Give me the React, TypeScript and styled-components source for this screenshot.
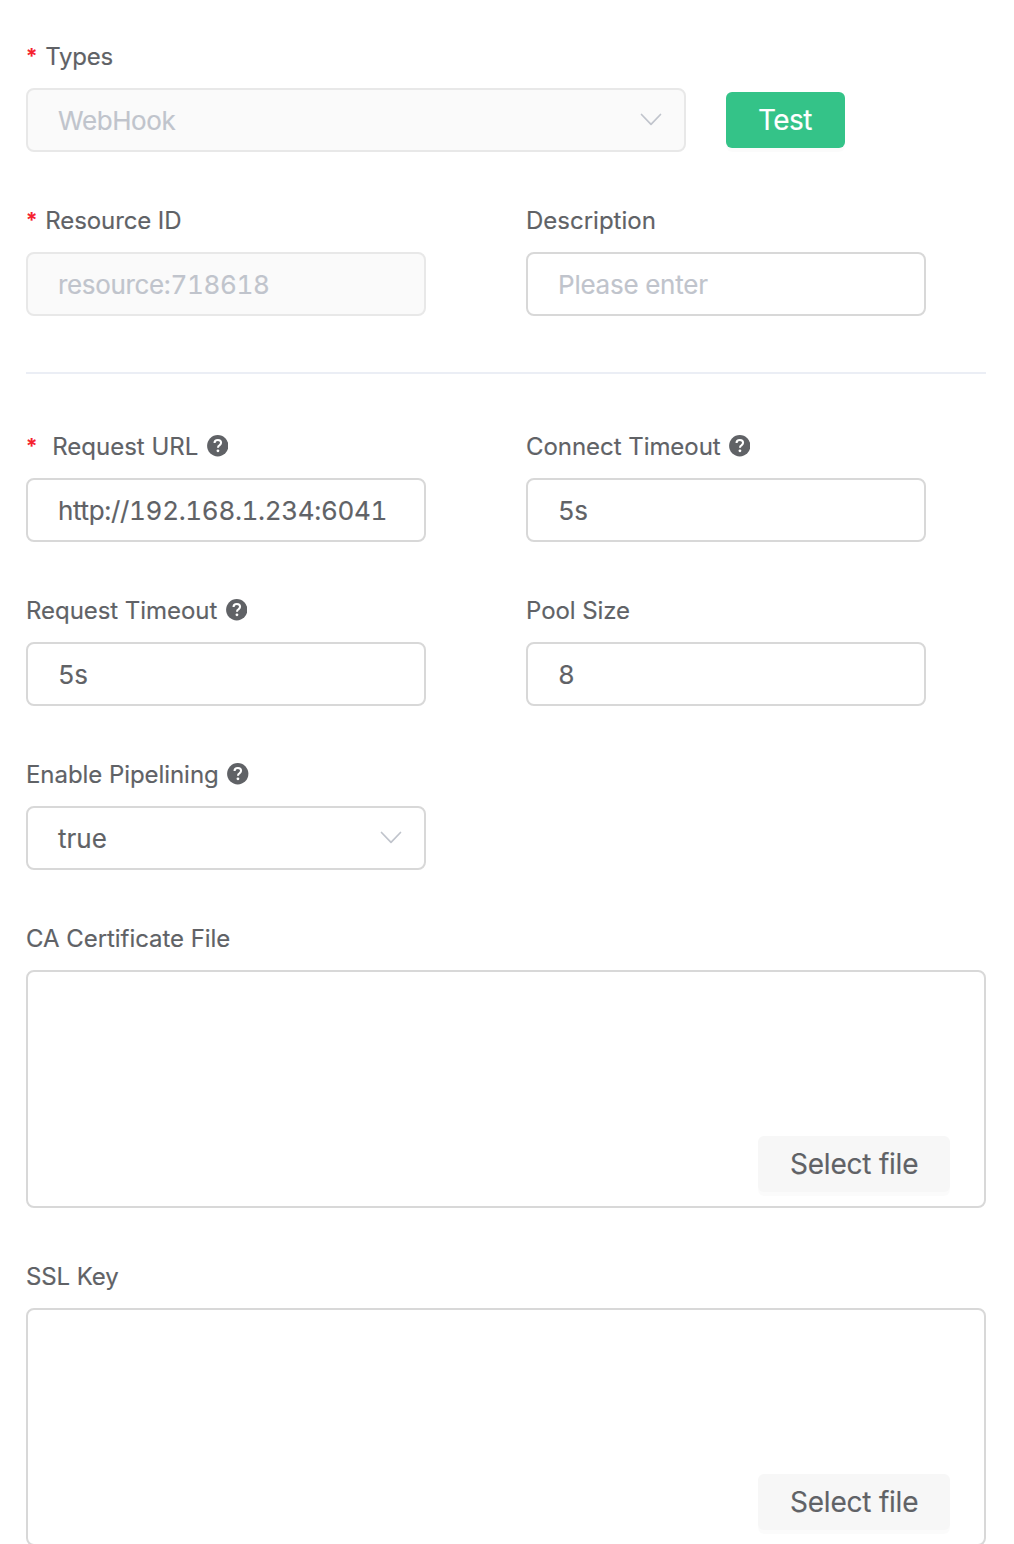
import React from "react";
import styled, { createGlobalStyle } from "styled-components";

const GlobalStyle = createGlobalStyle`
  *, *::before, *::after { box-sizing: border-box; }
  html, body { margin: 0; background: #fff; overflow: hidden; }
  body {
    font-family: Inter, "Liberation Sans", sans-serif;
    color: #606266;
    -webkit-text-stroke: 0.15px currentColor;
  }
`;

const Form = styled.form`
  width: 1014px;
  height: 1544px;
  overflow: hidden;
  padding: 36px 28px 0 26px;
`;

const Row = styled.div`
  display: flex;
  gap: 100px;
  margin-bottom: 48px;
`;

const Field = styled.div<{ $width: number }>`
  width: ${(p) => p.$width}px;
`;

const Label = styled.label<{ $spacing?: number }>`
  display: flex;
  align-items: center;
  height: 40px;
  margin-bottom: 12px;
  padding-top: 2px;
  font-size: 24px;
  line-height: 38px;
  letter-spacing: ${(p) => p.$spacing ?? 0}px;
  white-space: nowrap;
`;

const Required = styled.span<{ $gap: number }>`
  width: 10px;
  margin: -1px ${(p) => p.$gap}px 0 0;
  color: #f5222d;
  font-size: 21px;
  font-weight: 600;
  letter-spacing: 0;
`;

const controlBox = `
  width: 100%;
  border: 2px solid #d8d8d8;
  border-radius: 8px;
  background: #fff;
`;

const Input = styled.input<{ $spacing?: number }>`
  ${controlBox}
  display: block;
  height: 64px;
  padding: 0 28px 0 30px;
  outline: none;
  color: #606266;
  font: 26px Inter, "Liberation Sans", sans-serif;
  font-variant-numeric: tabular-nums;
  letter-spacing: ${(p) => p.$spacing ?? 0}px;
  &::placeholder { color: #c0c4cc; opacity: 1; }
  &:disabled { background: #fafafa; border-color: #e8e8e8; color: #c0c4cc; }
`;

const Select = styled.div<{ $disabled?: boolean; $spacing?: number }>`
  ${controlBox}
  display: flex;
  align-items: center;
  justify-content: space-between;
  height: 64px;
  padding: 0 22px 0 30px;
  font-size: 26px;
  letter-spacing: ${(p) => p.$spacing ?? 0}px;
  ${(p) => p.$disabled && "background: #fafafa; border-color: #e8e8e8; color: #c0c4cc;"}
`;

const Button = styled.button<{ $primary?: boolean; $width: number; $spacing: number }>`
  width: ${(p) => p.$width}px;
  height: 56px;
  padding: 0 0 0 32px;
  border: 0;
  border-radius: 6px;
  background: ${(p) => (p.$primary ? "#34c388" : "#f7f7f7")};
  color: ${(p) => (p.$primary ? "#fff" : "#606266")};
  box-shadow: 0 4px 0 rgba(0, 0, 0, 0.016);
  font: 28px Inter, "Liberation Sans", sans-serif;
  letter-spacing: ${(p) => p.$spacing}px;
  text-align: left;
  white-space: nowrap;
`;

const TypeRow = styled(Row)`
  gap: 40px;
  align-items: flex-end;
  & > ${Button} { margin-bottom: 4px; }
`;

const Divider = styled.hr`
  height: 2px;
  margin: 56px 0 52px;
  border: 0;
  background: #ebeef5;
`;

const FileBox = styled.div`
  ${controlBox}
  display: flex;
  align-items: flex-end;
  justify-content: flex-end;
  height: 238px;
  padding: 0 34px 14px 0;
`;

const ChevronIcon = styled.svg`
  display: block;
  flex: none;
  margin-bottom: 1.5px;
`;

const HelpIcon = styled.svg<{ $gap: number }>`
  display: block;
  flex: none;
  margin: -2px 0 0 ${(p) => p.$gap}px;
`;

const Chevron = () => (
  <ChevronIcon width="22" height="13" viewBox="0 0 22 13" fill="none" stroke="#c0c4cc" strokeWidth="1.7" strokeLinecap="round" strokeLinejoin="round">
    <path d="M1.5 1.5 11 11.3 20.5 1.5" />
  </ChevronIcon>
);

const Help = ({ gap = 9 }: { gap?: number }) => (
  <HelpIcon $gap={gap} width="21.5" height="21.5" viewBox="0 0 22 22">
    <circle cx="11" cy="11" r="10.9" fill="#606266" />
    <path d="M7.7 8.3C7.7 6.2 9.1 5.1 11.1 5.1s3.3 1.1 3.3 2.9c0 1.3-.8 1.9-1.7 2.6-.9.6-1.4 1-1.4 2.1v.4" fill="none" stroke="#fff" strokeWidth="2.1" />
    <circle cx="11.2" cy="16.2" r="1.45" fill="#fff" />
  </HelpIcon>
);

export default function App() {
  return (
    <>
      <GlobalStyle />
      <Form>
        <TypeRow>
          <Field $width={660}>
            <Label $spacing={-0.25}><Required $gap={9.3}>*</Required>Types</Label>
            <Select $disabled $spacing={-0.4}>WebHook<Chevron /></Select>
          </Field>
          <Button type="button" $primary $width={119} $spacing={-0.6}>Test</Button>
        </TypeRow>
        <Row>
          <Field $width={400}>
            <Label $spacing={-0.1}><Required $gap={9.3}>*</Required>Resource ID</Label>
            <Input disabled defaultValue="resource:718618" $spacing={-0.35} />
          </Field>
          <Field $width={400}>
            <Label>Description</Label>
            <Input placeholder="Please enter" $spacing={-0.23} />
          </Field>
        </Row>
        <Divider />
        <Row>
          <Field $width={400}>
            <Label><Required $gap={16.2}>*</Required>Request URL<Help gap={8.5} /></Label>
            <Input defaultValue="http://192.168.1.234:6041" $spacing={-0.33} />
          </Field>
          <Field $width={400}>
            <Label $spacing={-0.05}>Connect Timeout<Help gap={8.3} /></Label>
            <Input defaultValue="5s" $spacing={-0.6} />
          </Field>
        </Row>
        <Row>
          <Field $width={400}>
            <Label $spacing={-0.05}>Request Timeout<Help gap={8.7} /></Label>
            <Input defaultValue="5s" $spacing={-0.6} />
          </Field>
          <Field $width={400}>
            <Label $spacing={-0.07}>Pool Size</Label>
            <Input defaultValue="8" />
          </Field>
        </Row>
        <Row>
          <Field $width={400}>
            <Label $spacing={-0.06}>Enable Pipelining<Help gap={8.7} /></Label>
            <Select>true<Chevron /></Select>
          </Field>
        </Row>
        <Row>
          <Field $width={960}>
            <Label $spacing={-0.05}>CA Certificate File</Label>
            <FileBox><Button type="button" $width={192} $spacing={-0.22}>Select file</Button></FileBox>
          </Field>
        </Row>
        <Row>
          <Field $width={960}>
            <Label $spacing={-0.1}>SSL Key</Label>
            <FileBox><Button type="button" $width={192} $spacing={-0.22}>Select file</Button></FileBox>
          </Field>
        </Row>
      </Form>
    </>
  );
}
